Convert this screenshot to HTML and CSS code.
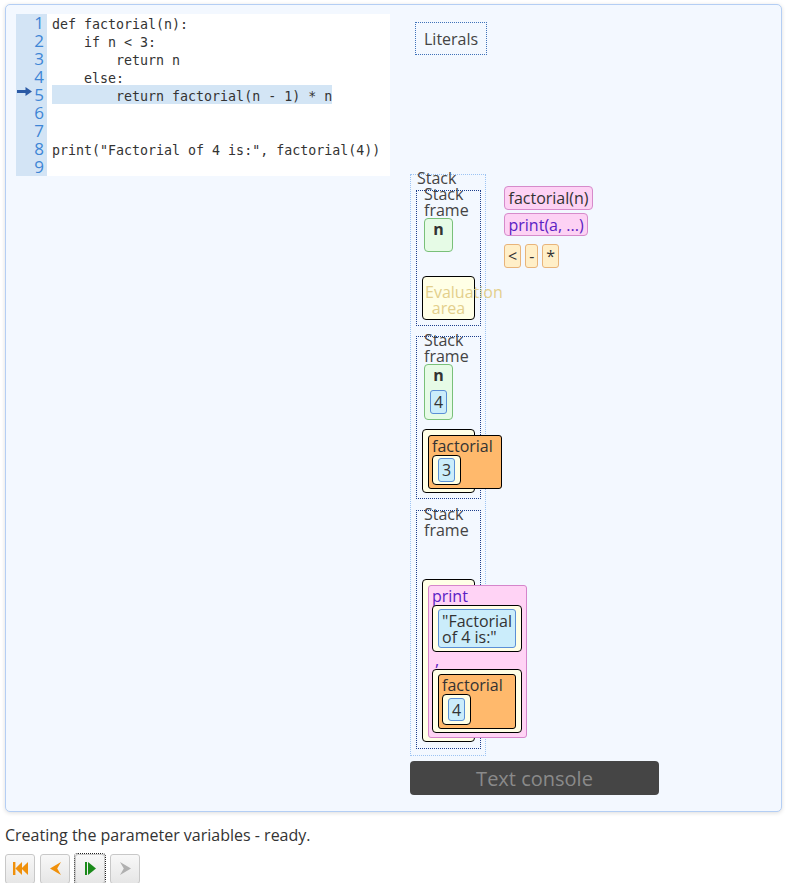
FILE: index.html
```html
<!DOCTYPE html>
<html lang="en">
<head>
<meta charset="utf-8">
<title>Visualizer</title>
<link rel="stylesheet" href="styles.css">
</head>
<body>
<div class="page">
  <div class="panel">
    <div class="editor">
      <div class="gutter">
        <div class="ln">1</div>
        <div class="ln">2</div>
        <div class="ln">3</div>
        <div class="ln">4</div>
        <div class="ln ln-cur"><svg class="arrow" viewBox="0 0 15 9" width="15" height="9"><rect x="0" y="3" width="9" height="3" fill="#2b5aa5"/><polygon points="8.5,0 15,4.5 8.5,9" fill="#2b5aa5"/></svg><span>5</span></div>
        <div class="ln">6</div>
        <div class="ln">7</div>
        <div class="ln">8</div>
        <div class="ln">9</div>
      </div>
      <div class="code">
        <div class="cl">def factorial(n):</div>
        <div class="cl">    if n &lt; 3:</div>
        <div class="cl">        return n</div>
        <div class="cl">    else:</div>
        <div class="cl"><span class="hl">        return factorial(n - 1) * n</span></div>
        <div class="cl"></div>
        <div class="cl"></div>
        <div class="cl">print("Factorial of 4 is:", factorial(4))</div>
        <div class="cl"></div>
      </div>
    </div>
    <div class="viz">
      <div class="literals-area"><div class="literals">Literals</div></div>
      <div class="middle">
        <div class="stack">
          <div class="stack-label">Stack</div>
          <div class="frame frame-first">
            <div class="frame-label">Stack frame</div>
            <div class="var"><div class="var-name">n</div><div class="var-slot"></div></div>
            <div class="eval eval-empty gap-a"><div class="placeholder">Evaluation area</div></div>
          </div>
          <div class="frame">
            <div class="frame-label">Stack frame</div>
            <div class="var"><div class="var-name">n</div><div class="var-slot"><div class="val">4</div></div></div>
            <div class="eval gap-b">
              <div class="call">
                <div class="call-name">factorial</div>
                <div class="slot"><div class="val">3</div></div>
              </div>
            </div>
          </div>
          <div class="frame frame-last">
            <div class="frame-label">Stack frame</div>
            <div class="eval gap-c">
              <div class="builtin">
                <div class="builtin-name">print</div>
                <div class="slot slot-stretch"><div class="val">"Factorial of 4 is:"</div></div>
                <div class="comma">,</div>
                <div class="slot slot-stretch slot-tall">
                  <div class="call">
                    <div class="call-name">factorial</div>
                    <div class="slot"><div class="val">4</div></div>
                  </div>
                </div>
              </div>
            </div>
          </div>
        </div>
        <div class="funcs">
          <div class="fn">factorial(n)</div>
          <div class="fn fn-builtin">print(a, ...)</div>
          <div class="ops"><span class="op">&lt;</span><span class="op">-</span><span class="op">*</span></div>
        </div>
      </div>
      <div class="console">Text console</div>
    </div>
  </div>
  <div class="status">Creating the parameter variables - ready.</div>
  <div class="controls">
    <button class="btn" title="Reset"><svg viewBox="0 0 15 13" width="15" height="13"><rect x="0" y="0" width="2.4" height="13" fill="#f0900a"/><polygon points="2.4,6.5 9,0 9,13" fill="#f0900a"/><polygon points="8.4,6.5 15,0 15,13" fill="#f0900a"/></svg></button>
    <button class="btn" title="Back"><svg viewBox="0 0 11 13" width="11" height="13"><path d="M0 6.5 L11 0 L7.2 6.5 L11 13 Z" fill="#f0900a"/></svg></button>
    <button class="btn btn-focus" title="Step"><svg viewBox="0 0 11 13" width="11" height="13"><rect x="0" y="0" width="2" height="13" fill="#1a8a1a"/><polygon points="3,0 11,6.5 3,13" fill="#1a8a1a"/></svg></button>
    <button class="btn" title="Forward"><svg viewBox="0 0 11 13" width="11" height="13"><path d="M11 6.5 L0 0 L3.8 6.5 L0 13 Z" fill="#b0b0b0"/></svg></button>
  </div>
</div>
</body>
</html>
```
FILE: styles.css
```css
* { box-sizing: border-box; }

body {
  margin: 0;
  font-family: "Open Sans", "Noto Sans", sans-serif;
  font-size: 16px;
  color: #333;
  background: #fff;
}

.page { padding: 4px 6px 0 5px; }

.panel {
  display: flex;
  align-items: flex-start;
  gap: 20px;
  background: #f3f8ff;
  border: 1px solid #b4cef4;
  border-radius: 5px;
  padding: 9px 10px 16px;
  box-shadow: 0 1px 4px rgba(0, 0, 0, 0.14);
}

/* ---------- editor ---------- */
.editor {
  flex: none;
  display: flex;
  width: 374px;
  height: 162px;
  background: #fff;
}

.gutter {
  width: 31px;
  background: #d3e4f5;
  padding: 0 3px 0 1px;
  font-size: 17px;
  color: #3e86d6;
}

.ln {
  height: 18px;
  line-height: 18px;
  text-align: right;
}

.ln-cur {
  display: flex;
  justify-content: space-between;
}

.arrow { margin-top: 1px; flex: none; }

.code {
  flex: 1;
  padding-left: 5px;
  font-family: "DejaVu Sans Mono", "Liberation Mono", monospace;
  font-size: 13.3px;
  color: #333;
}

.cl {
  height: 18px;
  padding-top: 2.5px;
  line-height: 16px;
  white-space: pre;
}

.hl {
  background: #d3e5f5;
  padding-top: 3.5px;
}

/* ---------- right side ---------- */
.viz {
  flex: 1;
  display: flex;
  flex-direction: column;
  align-items: flex-start;
}

.literals-area {
  height: 160px;
  padding: 8px 0 0 5px;
}

.literals {
  display: inline-block;
  border: 1px dotted #3f72b9;
  padding: 8px 8px 7px;
  line-height: 16px;
  color: #444;
}

.middle {
  display: flex;
  align-items: flex-start;
}

.stack {
  width: 76px;
  border: 1px dotted #9cc3f3;
  padding: 0 4px 6px 5px;
}

.stack-label {
  line-height: 16px;
  margin-top: -5px;
  padding-left: 1px;
  color: #444;
}

.frame {
  border: 1px dotted #1c3d8c;
  padding: 0 5px 5px;
  margin-top: 10px;
}

.frame-first { margin-top: 4px; }
.frame-last { margin-top: 11px; padding-bottom: 6px; }

.frame-label {
  line-height: 16px;
  margin-top: -5px;
  padding-left: 2px;
  color: #444;
}

.var {
  width: 29px;
  margin: 0 0 0 2px;
  background: #e6fbe6;
  border: 1px solid #79c079;
  border-radius: 4px;
  padding: 2px 0 5px;
  display: flex;
  flex-direction: column;
  align-items: center;
}

.var-name {
  font-weight: bold;
  line-height: 16px;
  color: #333;
}

.var-slot {
  margin-top: 7px;
  min-height: 2px;
}

.val {
  background: #cbedfb;
  border: 1px solid #5b8fd6;
  border-radius: 3px;
  padding: 3px 3px 2.5px;
  line-height: 16px;
  color: #333;
}

.eval {
  display: flex;
  flex-direction: column;
  align-items: flex-start;
  background: #ffffe6;
  border: 1px solid #000;
  border-radius: 4px;
  padding: 5px 5px 3px;
}

.gap-a { margin-top: 24px; }
.gap-b { margin-top: 9px; }
.gap-c { margin-top: 41px; }

.eval-empty { align-items: stretch; }

.placeholder {
  margin: 0 -3px;
  padding-top: 2px;
  line-height: 16px;
  text-align: center;
  color: #e3cf8c;
}

.call {
  display: flex;
  flex-direction: column;
  align-items: flex-start;
  background: #ffb96c;
  border: 1px solid #000;
  border-radius: 3px;
  padding: 2px 8px 3px 3px;
}

.call-name { line-height: 16px; color: #333; }

.slot {
  display: flex;
  flex-direction: column;
  align-items: flex-start;
  background: #ffffe6;
  border: 1px solid #000;
  border-radius: 4px;
  padding: 2.5px 5px;
  margin-top: 1px;
}

.slot-stretch { align-items: stretch; margin-top: 1px; }
.slot-tall { padding: 4.5px 5px 3.5px; margin-top: 1px; }

.builtin {
  display: flex;
  flex-direction: column;
  align-items: stretch;
  background: #ffd3f5;
  border: 1px solid #d585cb;
  border-radius: 3px;
  padding: 2px 4px 4px 3px;
}

.builtin-name {
  line-height: 16px;
  color: #5b20c4;
}

.comma {
  line-height: 16px;
  padding-left: 3px;
  color: #5b20c4;
}

.funcs {
  margin: 12px 0 0 18px;
  display: flex;
  flex-direction: column;
  align-items: flex-start;
  gap: 3px;
}

.fn {
  background: #fdd2f4;
  border: 1px solid #d68bcb;
  border-radius: 4px;
  padding: 3px 3.5px 2.5px;
  line-height: 16px;
  color: #333;
}

.fn-builtin { color: #5b20c4; }

.ops {
  display: flex;
  gap: 4px;
  margin-top: 5px;
}

.op {
  background: #ffefc8;
  border: 1px solid #e8b47a;
  border-radius: 3px;
  padding: 3px 3px 2.5px;
  line-height: 16px;
  color: #333;
}

.console {
  margin-top: 5px;
  width: 249px;
  height: 34px;
  padding-top: 2px;
  line-height: 32px;
  background: #454545;
  border-radius: 4px;
  color: #8a8a8a;
  font-size: 20px;
  text-align: center;
}

/* ---------- footer ---------- */
.status {
  margin-top: 12px;
  color: #333;
}

.controls {
  margin-top: 8px;
  display: flex;
  gap: 5px;
}

.btn {
  width: 30px;
  height: 30px;
  padding: 0;
  display: flex;
  align-items: center;
  justify-content: center;
  border: 1px solid #c8c8c8;
  border-radius: 3px;
  background: linear-gradient(#f8f8f8, #e6e6e6);
}

.btn svg { margin-top: -2px; }

.btn-focus {
  outline: 1px dotted #222;
  outline-offset: 0;
}
```
